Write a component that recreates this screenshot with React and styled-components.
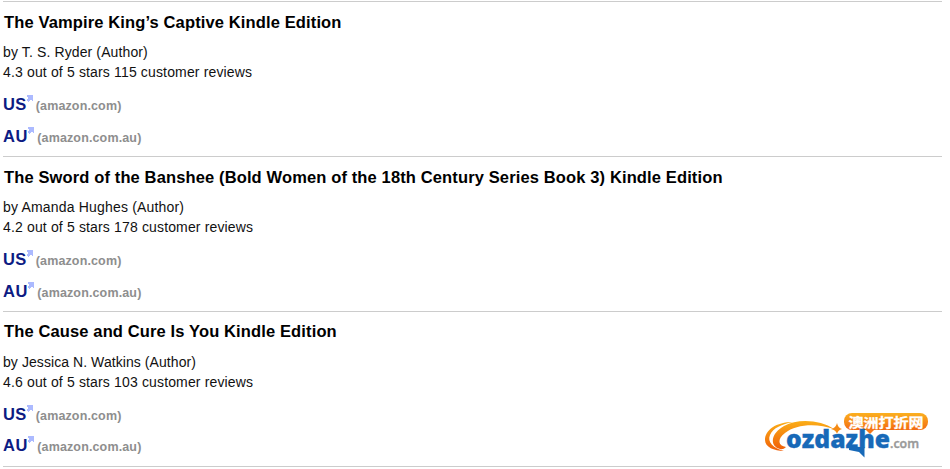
import React from 'react'
import styled, { createGlobalStyle } from 'styled-components'

const GlobalStyle = createGlobalStyle`
  body {
    margin: 0;
    background: #fff;
    font-family: "Liberation Sans", Arial, sans-serif;
  }
`

const Page = styled.main`
  position: relative;
  height: 469px;
  box-sizing: border-box;
  padding: 1px 8px 0 3px;
  overflow: hidden;
`

const Book = styled.article`
  box-sizing: border-box;
  height: 155px;
  border-top: 1px solid #ccc;
`

const Title = styled.h3`
  margin: 0;
  padding: ${({ $raised }) => ($raised ? '9px 0 11px 1px' : '10px 0 10px 1px')};
  font-size: 16.5px;
  line-height: 20px;
  font-weight: bold;
  letter-spacing: 0.13px;
  color: #000;
  white-space: nowrap;
`

const Details = styled.div`
  margin-bottom: 11px;
  font-size: 14px;
  line-height: 20px;
  color: #111;
`

const Line = styled.p`
  margin: 0;
  letter-spacing: ${({ $spacing }) => $spacing || '0.15px'};
`

const Store = styled.div`
  display: flex;
  align-items: baseline;
  height: 22px;
  margin-bottom: ${({ $tight }) => ($tight ? '9px' : '10px')};
  line-height: 22px;
  font-weight: bold;
`

const Country = styled.a`
  font-size: 16.5px;
  color: #0c1b83;
  letter-spacing: ${({ $spacing }) => $spacing};
`

const Domain = styled.span`
  margin-left: 3px;
  font-size: 12.5px;
  letter-spacing: 0.14px;
  color: #8e8e8e;
`

const Arrow = styled.svg`
  align-self: flex-start;
  width: 6px;
  height: 7px;
  margin-top: 2px;
`

const Footer = styled.footer`
  border-top: 1px solid #ccc;
`

const Watermark = styled.svg`
  position: absolute;
  left: 755px;
  top: 405px;
  width: 195px;
  height: 60px;
`

const books = [
  {
    title: 'The Vampire King’s Captive Kindle Edition',
    author: 'T. S. Ryder',
    spacing: '0.12px',
    rating: '4.3',
    reviews: 115,
  },
  {
    title: 'The Sword of the Banshee (Bold Women of the 18th Century Series Book 3) Kindle Edition',
    author: 'Amanda Hughes',
    spacing: '0.18px',
    rating: '4.2',
    reviews: 178,
  },
  {
    title: 'The Cause and Cure Is You Kindle Edition',
    author: 'Jessica N. Watkins',
    spacing: '0.07px',
    rating: '4.6',
    reviews: 103,
  },
]

const ExternalArrow = () => (
  <Arrow viewBox="0 0 6 7" shapeRendering="crispEdges">
    <path fill="#acbaff" d="M0 0H6V6H5V5H4V5H3V6H2V7H1V6H0V4H1V2H0Z" />
  </Arrow>
)

const Logo = () => (
  <Watermark viewBox="0 0 195 60">
    <defs>
      <linearGradient id="swoosh" x1="0" y1="0" x2="0" y2="1">
        <stop offset="0" stopColor="#fbae17" />
        <stop offset="1" stopColor="#f0600a" />
      </linearGradient>
      <linearGradient id="badge" x1="0" y1="0" x2="0" y2="1">
        <stop offset="0" stopColor="#fbb01f" />
        <stop offset="1" stopColor="#f36b12" />
      </linearGradient>
    </defs>
    <path fill="url(#swoosh)" d="M79 24C66 15 43 13 29 21C16 28 14 41 25 44C27 44.5 29 44 31 42C23 41 22 34 30 28C41 19 62 18 79 24Z" />
    <path fill="url(#swoosh)" d="M38 17C21 17 10 25 10 35C10 42 19 46 29 46C18 43 12 37 15 30C18 23 27 19 38 17Z" />
    <path fill="#f58a13" d="M82 18Q83 23 87 24Q83 25 82 29Q81 25 76 24Q81 23 82 18Z" />
    <rect x="89" y="8" width="84" height="17" rx="8" fill="url(#badge)" />
    <path fill="#f47719" d="M110 24H120L115 29Z" />
    <text x="93.5" y="21.5" fill="#fff" stroke="#fff" strokeWidth=".3" fontFamily="Noto Sans CJK SC, sans-serif" fontSize="13" fontWeight="bold" textLength="75" lengthAdjust="spacingAndGlyphs">澳洲打折网</text>
    <text x="31" y="43" fill="#1769b8" stroke="#1769b8" strokeWidth=".3" fontFamily="Open Sans, sans-serif" fontSize="24.5" fontWeight="800" textLength="104" lengthAdjust="spacingAndGlyphs">ozdazhe</text>
    <path fill="#1769b8" d="M94 41L105 42H109.5V52.5L104 47L94 45Z" />
    <text x="135" y="43" fill="#999" stroke="#999" strokeWidth=".4" fontFamily="Open Sans, sans-serif" fontSize="12.5" fontWeight="600" textLength="29" lengthAdjust="spacingAndGlyphs">.com</text>
  </Watermark>
)

export default () => (
  <Page>
    <GlobalStyle />
    {books.map(({ title, author, spacing, rating, reviews }, index) => (
      <Book key={title}>
        <Title $raised={index === 2}>{title}</Title>
        <Details>
          <Line $spacing={spacing}>by {author} (Author)</Line>
          <Line>{rating} out of 5 stars {reviews} customer reviews</Line>
        </Details>
        <Store $tight={index === 2}>
          <Country $spacing="0.4px">US</Country>
          <ExternalArrow />
          <Domain>(amazon.com)</Domain>
        </Store>
        <Store>
          <Country $spacing="0.7px">AU</Country>
          <ExternalArrow />
          <Domain>(amazon.com.au)</Domain>
        </Store>
      </Book>
    ))}
    <Footer />
    <Logo />
  </Page>
)
